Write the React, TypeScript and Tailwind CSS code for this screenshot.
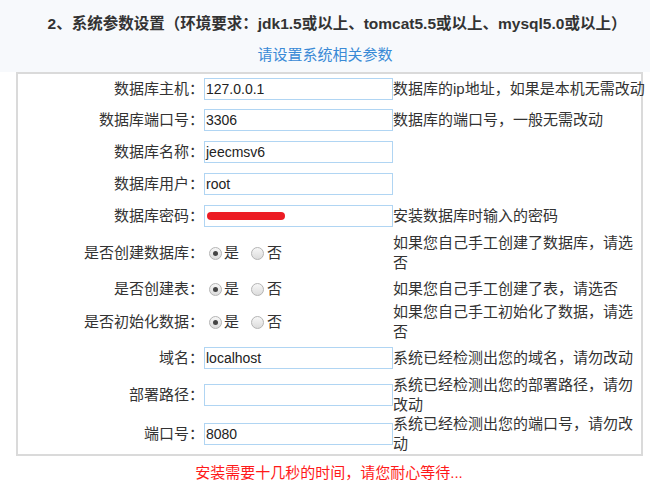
import React from "react";

const font = { fontFamily: '"Liberation Sans","Noto Sans CJK SC",sans-serif' };

function Radio({ checked }: { checked: boolean }) {
  return (
    <span className="relative inline-flex h-[13px] w-[13px] items-center justify-center rounded-full border border-[#b4b4b4] bg-gradient-to-b from-[#f7f7f7] to-[#dcdcdc]">
      {checked && <span className="h-[5px] w-[5px] rounded-full bg-[#444]" />}
    </span>
  );
}

function Box({ value, redacted }: { value?: string; redacted?: boolean }) {
  return (
    <div className="flex h-[22px] w-[189px] items-center border border-[#b0d5f3] bg-white pl-[1px] text-[14px] text-[#222]">
      {value}
      {redacted && <div className="ml-[1px] h-[8px] w-[78px] rounded-full bg-[#ec1c24]" />}
    </div>
  );
}

type Row = {
  label: string;
  h: string;
  value?: string;
  redacted?: boolean;
  radio?: boolean;
  desc: string[];
};

const rows: Row[] = [
  { label: "数据库主机：", h: "h-[30px]", value: "127.0.0.1", desc: ["数据库的ip地址，如果是本机无需改动"] },
  { label: "数据库端口号：", h: "h-[32px]", value: "3306", desc: ["数据库的端口号，一般无需改动"] },
  { label: "数据库名称：", h: "h-[32px]", value: "jeecmsv6", desc: [] },
  { label: "数据库用户：", h: "h-[32px]", value: "root", desc: [] },
  { label: "数据库密码：", h: "h-[32px]", redacted: true, desc: ["安装数据库时输入的密码"] },
  { label: "是否创建数据库：", h: "h-[42px]", radio: true, desc: ["如果您自己手工创建了数据库，请选", "否"] },
  { label: "是否创建表：", h: "h-[30px]", radio: true, desc: ["如果您自己手工创建了表，请选否"] },
  { label: "是否初始化数据：", h: "h-[36px]", radio: true, desc: ["如果您自己手工初始化了数据，请选", "否"] },
  { label: "域名：", h: "h-[36px]", value: "localhost", desc: ["系统已经检测出您的域名，请勿改动"] },
  { label: "部署路径：", h: "h-[38px]", value: "", desc: ["系统已经检测出您的部署路径，请勿", "改动"] },
  { label: "端口号：", h: "h-[40px]", value: "8080", desc: ["系统已经检测出您的端口号，请勿改", "动"] },
];

export default function App() {
  return (
    <div className="w-[650px] h-[489px] bg-white text-[#333]" style={font}>
      <div className="h-[72px] bg-[#f7f9fc] flex flex-col items-center">
        <div className="mt-[13px] ml-[24px] h-[22px] leading-[22px] text-[15.5px] font-bold text-[#333] whitespace-nowrap">
          2、系统参数设置（环境要求：jdk1.5或以上、tomcat5.5或以上、mysql5.0或以上）
        </div>
        <div className="mt-[10px] h-[20px] leading-[20px] text-[15px] text-[#3a8ad6]">请设置系统相关参数</div>
      </div>
      <div className="ml-[16px] w-[627px] border-2 border-[#dadada] bg-white">
        {rows.map((r, i) => (
          <div key={i} className={`flex items-center ${r.h}`}>
            <div className="w-[186px] shrink-0 text-right text-[15px] leading-[20px] whitespace-nowrap">{r.label}</div>
            <div className="w-[189px] shrink-0 flex items-center">
              {r.radio ? (
                <div className="flex items-center text-[15px] leading-[20px]">
                  <span className="ml-[5px] flex"><Radio checked /></span>
                  <span className="ml-[2px]">是</span>
                  <span className="ml-[12px] flex"><Radio checked={false} /></span>
                  <span className="ml-[3px]">否</span>
                </div>
              ) : (
                <Box value={r.value} redacted={r.redacted} />
              )}
            </div>
            <div className="min-w-0 flex-1 text-[15px] leading-[20px] whitespace-nowrap">
              {r.desc.map((d, j) => (
                <div key={j}>{d}</div>
              ))}
            </div>
          </div>
        ))}
      </div>
      <div className="mt-[7px] h-[20px] leading-[20px] text-center text-[15px] text-[#ff1a1a] pl-[8px]">
        安装需要十几秒的时间，请您耐心等待...
      </div>
    </div>
  );
}
